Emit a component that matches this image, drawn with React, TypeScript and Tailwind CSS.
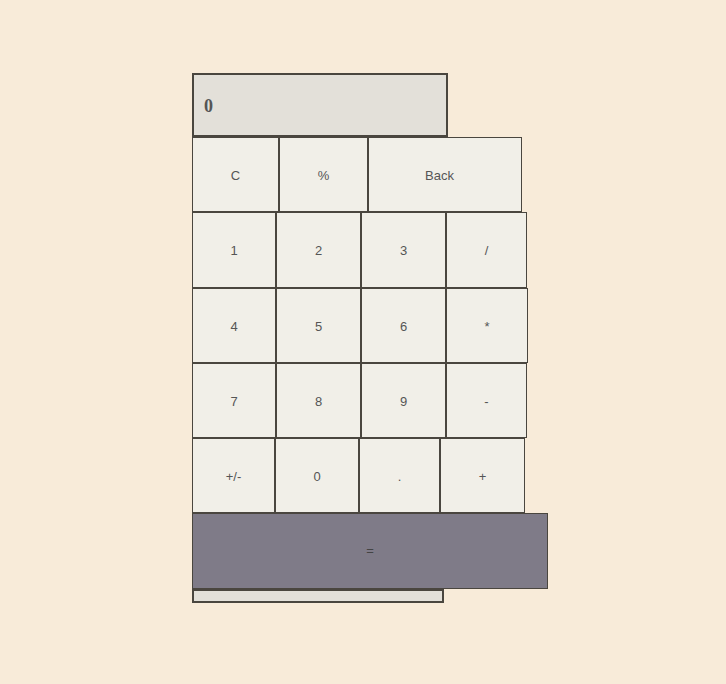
import React from "react";

const btn =
  "box-border flex items-center justify-center border border-[#4a463f] bg-[#f1efe8] pt-[2px] text-[13px] text-[#555555]";

function Row({ items, h }: { items: [string, string][]; h: string }) {
  return (
    <div className={`flex ${h}`}>
      {items.map(([label, w], i) => (
        <div key={i} className={`${btn} ${w} h-full`}>
          {label}
        </div>
      ))}
    </div>
  );
}

export default function App() {
  return (
    <div
      className="min-h-screen w-full bg-[#f8ebd9] pl-[192px] pt-[73px]"
      style={{ fontFamily: '"Liberation Sans", Arial, sans-serif' }}
    >
      <div className="flex flex-col items-start">
        <div
          className="box-border flex h-[64px] w-[256px] items-center border-2 border-[#4a463f] bg-[#e3e0d9] pl-[10px] pt-[2px] text-[18px] font-bold text-[#555555]"
          style={{ fontFamily: '"Liberation Serif", "Times New Roman", serif' }}
        >
          0
        </div>
        <Row
          h="h-[75px]"
          items={[
            ["C", "w-[87px]"],
            ["%", "w-[89px]"],
            ["Back", "w-[154px] pr-[11px]"],
          ]}
        />
        <Row
          h="h-[76px]"
          items={[
            ["1", "w-[84px]"],
            ["2", "w-[85px]"],
            ["3", "w-[85px]"],
            ["/", "w-[81px]"],
          ]}
        />
        <Row
          h="h-[75px]"
          items={[
            ["4", "w-[84px]"],
            ["5", "w-[85px]"],
            ["6", "w-[85px]"],
            ["*", "w-[82px]"],
          ]}
        />
        <Row
          h="h-[75px]"
          items={[
            ["7", "w-[84px]"],
            ["8", "w-[85px]"],
            ["9", "w-[85px]"],
            ["-", "w-[81px]"],
          ]}
        />
        <Row
          h="h-[75px]"
          items={[
            ["+/-", "w-[83px]"],
            ["0", "w-[84px]"],
            [".", "w-[81px]"],
            ["+", "w-[85px]"],
          ]}
        />
        <div className="box-border flex h-[76px] w-[356px] items-center justify-center border border-[#4a463f] bg-[#7f7b88] text-[13px] text-[#444444]">
          =
        </div>
        <div className="box-border h-[14px] w-[252px] border-2 border-[#4a463f] bg-[#e3e0d9]" />
      </div>
    </div>
  );
}
